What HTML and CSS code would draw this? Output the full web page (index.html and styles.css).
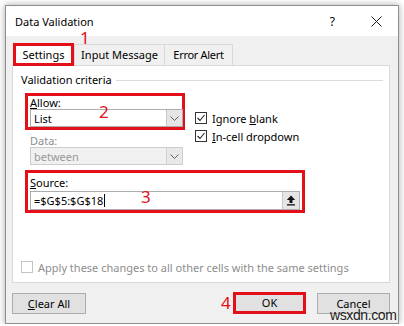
FILE: index.html
```html
<!DOCTYPE html>
<html lang="en">

<head>
    <meta charset="UTF-8">
    <meta name="viewport" content="width=device-width, initial-scale=1.0">
    <title>Data Validation</title>
    <link rel="stylesheet" href="styles.css">
</head>

<body>
    <div class="dialog">
        <div class="titlebar">
            <span class="title">Data Validation</span>
            <span class="help">?</span>
            <svg class="close" width="11" height="11" viewBox="0 0 11 11">
                <path d="M0.5 0.5 L10.5 10.5 M10.5 0.5 L0.5 10.5" stroke="#1a1a1a" stroke-width="1" fill="none"/>
            </svg>
        </div>
        <div class="body">
            <div class="tabs">
                <div class="tab active">Settings</div>
                <div class="tab input-tab">Input Message</div>
                <div class="tab error-tab">Error Alert</div>
            </div>
            <div class="panel">
                <div class="group-title"><span>Validation criteria</span></div>
                <div class="criteria">
                    <div class="col">
                        <div class="mark allow">
                            <div class="label"><u>A</u>llow:</div>
                            <div class="select">
                                <span>List</span>
                                <span class="arrow"><svg width="9" height="5" viewBox="0 0 9 5"><path d="M0.5 0.5 L4.5 4.5 L8.5 0.5" stroke="#606060" fill="none"/></svg></span>
                            </div>
                        </div>
                        <div class="label dim data-label">Data:</div>
                        <div class="select disabled">
                            <span>between</span>
                            <span class="arrow"><svg width="9" height="5" viewBox="0 0 9 5"><path d="M0.5 0.5 L4.5 4.5 L8.5 0.5" stroke="#606060" fill="none"/></svg></span>
                        </div>
                    </div>
                    <div class="checks">
                        <div class="check">
                            <span class="box"><svg width="10" height="10" viewBox="0 0 10 10"><path d="M1.5 5 L4 7.5 L8.5 2" stroke="#222" stroke-width="1.1" fill="none"/></svg></span>
                            <span>Ignore <u>b</u>lank</span>
                        </div>
                        <div class="check">
                            <span class="box"><svg width="10" height="10" viewBox="0 0 10 10"><path d="M1.5 5 L4 7.5 L8.5 2" stroke="#222" stroke-width="1.1" fill="none"/></svg></span>
                            <span><u>I</u>n-cell dropdown</span>
                        </div>
                    </div>
                </div>
                <div class="mark source">
                    <div class="label"><u>S</u>ource:</div>
                    <div class="input">
                        <span class="value">=$G$5:$G$18<i class="caret"></i></span>
                        <span class="pick"><svg width="10" height="11" viewBox="0 0 10 11"><path d="M5 0.5 L0.8 5 L3.5 5 L3.5 8 L6.5 8 L6.5 5 L9.2 5 Z" fill="#111"/><rect x="1" y="9.2" width="8" height="1.3" fill="#111"/></svg></span>
                    </div>
                </div>
                <div class="check apply">
                    <span class="box empty"></span>
                    <span>Apply these changes to all other cells with the same settings</span>
                </div>
            </div>
            <div class="buttons">
                <div class="btn"><u>C</u>lear All</div>
                <div class="btn ok">OK</div>
                <div class="btn">Cancel</div>
            </div>
        </div>
    </div>
    <span class="num n1">1</span>
    <span class="num n2">2</span>
    <span class="num n3">3</span>
    <span class="num n4">4</span>
    <span class="watermark">wsxdn.com</span>
</body>

</html>
```

FILE: styles.css
```css
* {
    margin: 0;
    padding: 0;
    box-sizing: border-box;
}

body {
    background: #fff;
    font-family: "Noto Sans", "Open Sans", sans-serif;
    font-size: 11px;
    color: #000;
}

u {
    text-decoration: underline;
    text-underline-offset: 1px;
}

.dialog {
    display: flex;
    flex-direction: column;
    width: 394px;
    height: 319px;
    margin: 5px 0 0 5px;
    border: 1px solid #8e8e8e;
    background: #f0f0f0;
    box-shadow: 0 0 7px rgba(0, 0, 0, .35);
}

.titlebar {
    display: flex;
    align-items: center;
    height: 30px;
    padding: 0 16px 0 9px;
    background: #fff;
}

.titlebar .title {
    font-size: 11px;
}

.titlebar .help {
    margin-left: auto;
    margin-right: 36px;
    font-size: 12px;
}

.body {
    flex: 1;
    padding: 7px 8px 0 6px;
}

.tabs {
    display: flex;
    align-items: flex-end;
    height: 22px;
    padding-left: 1px;
}

.tab {
    height: 21px;
    line-height: 20px;
    text-align: center;
    border: 1px solid #d9d9d9;
    border-bottom: 0;
    background: #f0f0f0;
}

.tab.active {
    position: relative;
    z-index: 1;
    width: 61px;
    height: 23px;
    margin-bottom: -1px;
    line-height: 17px;
    border: 3px solid #e3101a;
    background: #fff;
}

.input-tab {
    width: 91px;
}

.error-tab {
    width: 68px;
    letter-spacing: -0.3px;
    border-left: 0;
}

.panel {
    display: flex;
    flex-direction: column;
    height: 218px;
    padding: 6px 6px 0 8px;
    border: 1px solid #d9d9d9;
    background: #fff;
}

.group-title {
    display: flex;
    align-items: center;
    gap: 4px;
    line-height: 16px;
}

.group-title::after {
    content: "";
    flex: 1;
    height: 1px;
    background: #dcdcdc;
}

.criteria {
    display: flex;
    margin: 5px 0 0 4px;
}

.col {
    width: 160px;
}

.mark {
    border: 3px solid #e3101a;
}

.label {
    line-height: 13px;
}

.dim {
    color: #8d8d8d;
}

.allow {
    height: 37px;
    padding-left: 2px;
}

.select {
    display: flex;
    align-items: center;
    justify-content: space-between;
    width: 153px;
    height: 18px;
    padding-left: 3px;
    border: 1px solid #adadad;
    background: #fff;
}

.select .arrow {
    display: flex;
    align-items: center;
    justify-content: center;
    width: 16px;
    height: 100%;
    border-left: 1px solid #c8c8c8;
    background: #e5e5e5;
}

.select.disabled {
    margin-left: 5px;
    border-color: #cccccc;
    background: #f0f0f0;
    color: #999;
}

.select.disabled .arrow {
    background: #e8e8e8;
    border-left-color: #d0d0d0;
}

.data-label {
    margin: 5px 0 0 5px;
    line-height: 12px;
}

.checks {
    padding-top: 16px;
    margin-left: 10px;
}

.check {
    display: flex;
    align-items: center;
    gap: 5px;
    height: 18px;
}

.box {
    display: flex;
    align-items: center;
    justify-content: center;
    width: 12px;
    height: 12px;
    border: 1px solid #333;
    background: #fff;
}

.box.empty {
    border-color: #c4c4c4;
}

.source {
    width: 280px;
    height: 43px;
    margin: 5px 0 0 4px;
    padding: 3px 0 0 2px;
}

.input {
    display: flex;
    align-items: center;
    justify-content: space-between;
    width: 270px;
    height: 19px;
    margin-top: 2px;
    padding-left: 3px;
    border: 1px solid #adadad;
    background: #fff;
}

.caret {
    display: inline-block;
    width: 1px;
    height: 13px;
    margin-left: 1px;
    vertical-align: -2px;
    background: #000;
}

.pick {
    display: flex;
    align-items: center;
    justify-content: center;
    width: 17px;
    height: 100%;
    border-left: 1px solid #c8c8c8;
    background: #e5e5e5;
}

.apply {
    margin: auto 0 6px;
    color: #8d8d8d;
}

.buttons {
    display: flex;
    margin-top: 10px;
}

.btn {
    width: 74px;
    height: 21px;
    line-height: 19px;
    text-align: center;
    border: 1px solid #adadad;
    background: #e1e1e1;
}

.btn.ok {
    width: 73px;
    height: 22px;
    margin: -1px 11px 0 auto;
    line-height: 16px;
    border: 3px solid #e3101a;
}

.btn:last-child {
    width: 73px;
}

.num {
    position: absolute;
    font-size: 17px;
    line-height: 12px;
    color: #e3101a;
}

.n1 { left: 80px; top: 32px; }
.n2 { left: 99px; top: 106px; }
.n3 { left: 141px; top: 191px; }
.n4 { left: 221px; top: 297px; }

.watermark {
    position: absolute;
    left: 330px;
    top: 307px;
    font-family: "Liberation Sans", sans-serif;
    font-size: 14px;
    letter-spacing: -0.4px;
    color: #222;
}
```
